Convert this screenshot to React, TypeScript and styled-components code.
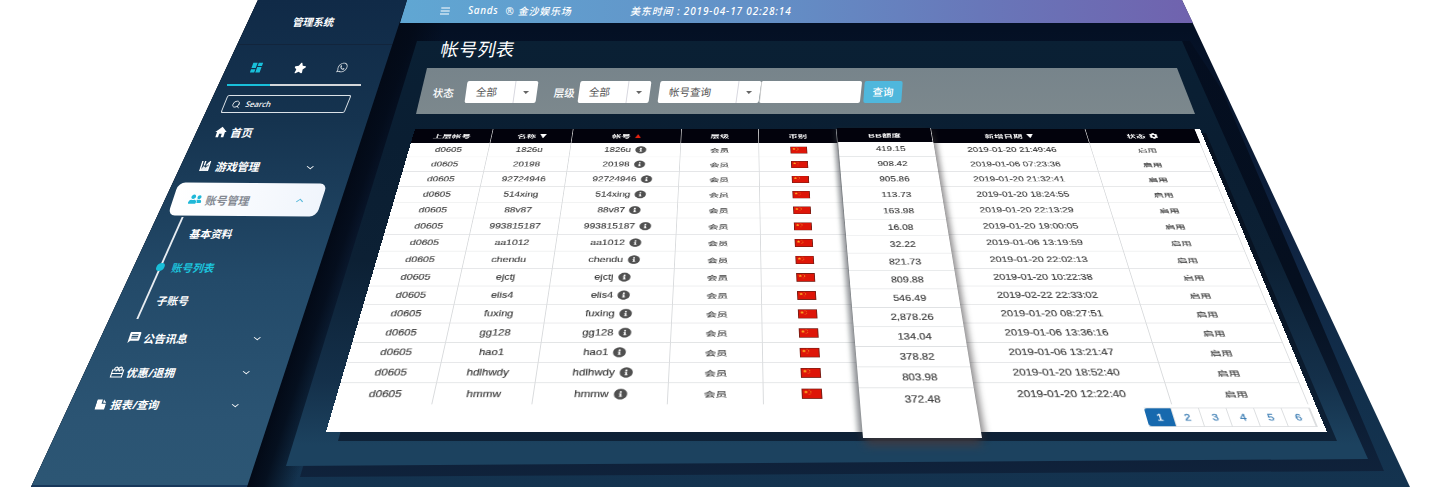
import React from "react";
import styled, { createGlobalStyle, css } from "styled-components";
import { MdDashboard, MdMessage } from "react-icons/md";
import { IoMdHome } from "react-icons/io";
import { FaStar, FaWhatsapp, FaUserFriends, FaInfoCircle, FaCog } from "react-icons/fa";
import { Search as SearchIcon } from "lucide-react";

type Point = [number, number];
type Quad = [Point, Point, Point, Point];

/* matrix3d that maps a w x h box onto a quad (top-left, top-right, bottom-right, bottom-left) */
const project = (w: number, h: number, q: Quad) => {
  const [[x0, y0], [x1, y1], [x2, y2], [x3, y3]] = q;
  const dx1 = x1 - x2, dx2 = x3 - x2, dx3 = x0 - x1 + x2 - x3;
  const dy1 = y1 - y2, dy2 = y3 - y2, dy3 = y0 - y1 + y2 - y3;
  const det = dx1 * dy2 - dx2 * dy1;
  const g = (dx3 * dy2 - dx2 * dy3) / det;
  const k = (dx1 * dy3 - dx3 * dy1) / det;
  const a = x1 - x0 + g * x1, b = x3 - x0 + k * x3;
  const d = y1 - y0 + g * y1, e = y3 - y0 + k * y3;
  return `matrix3d(${[a / w, d / w, 0, g / w, b / h, e / h, 0, k / h, 0, 0, 1, 0, x0, y0, 0, 1]
    .map((n) => n.toFixed(9))
    .join(",")})`;
};

const Global = createGlobalStyle`
  * { box-sizing: border-box; }
  body { margin: 0; background: #fff; overflow: hidden; }
`;

const Stage = styled.div`
  display: grid;
  position: relative;
  width: 1440px;
  height: 500px;
  overflow: hidden;
  background: #fff;
  color: #fff;
  font-family: "Noto Sans", "Noto Sans CJK SC", sans-serif;
  > * { grid-area: 1 / 1; }
`;

const Floor = styled.div`
  height: 487px;
  clip-path: polygon(258px 0, 1182px 0, 1410px 100%, 31px 100%);
  background:
    linear-gradient(108.2deg, #030a17 388px, rgba(3, 10, 23, 0.85) 402px, rgba(5, 16, 36, 0) 432px),
    linear-gradient(#041024 30px, #07152c 90px, #0f2341 230px, #12304c 400px, #14334f);
`;

const PanelShade = styled.div`
  height: 487px;
  clip-path: polygon(426px 50px, 1190px 41px, 1222px 90px, 1384px 471px, 300px 477px);
  background: linear-gradient(#040e20, #050f1f 60%, #0e2038 92%, #10233c);
`;

const Panel = styled.div`
  height: 487px;
  clip-path: polygon(417px 41px, 1182px 41px, 1368px 459px, 286px 466px);
  background: linear-gradient(#0a2034 41px, #0a1e32 140px, #0c2034 260px, #14304a 380px, #1c425f 445px);
`;

const CardShade = styled.div`
  height: 487px;
  clip-path: polygon(420px 145px, 1206px 133px, 1337px 441px, 338px 441px);
  background: linear-gradient(#050f1e, #081424 60%, #10263d);
`;

const Content = styled.main`
  display: flex;
  flex-direction: column;
  margin-left: 399px;
  width: 830px;
`;

const TopBar = styled.header`
  display: flex;
  align-items: center;
  height: 23px;
  padding-left: 41px;
  font-size: 10px;
  font-style: italic;
  font-weight: 500;
  letter-spacing: 0.7px;
  white-space: pre;
  background: linear-gradient(90deg, #60a7d3, #638fc6 45%, #6877b9 70%, #7062ae 96%);
  clip-path: polygon(8px 0, 783px 0, 794px 100%, 1px 100%);
  svg { margin-right: 18px; }
`;

const Brand = styled.span`
  display: flex;
  gap: 7px;
  width: 162px;
  padding-bottom: 3px;
`;

const Clock = styled.span`
  padding-bottom: 3px;
  letter-spacing: 0.86px;
`;

const Title = styled.h1`
  margin: 0 0 0 42px;
  height: 45px;
  padding-top: 7px;
  font-size: 18px;
  line-height: 38px;
  font-weight: 400;
  letter-spacing: 0.5px;
  transform: skewX(-12deg);
  transform-origin: 0 26px;
`;

const FilterBar = styled.section`
  display: flex;
  align-items: center;
  height: 46px;
  padding: 2px 0 0 34px;
  background: linear-gradient(#77848b, #7c888d);
  clip-path: polygon(28px 0, 778px 0, 796px 100%, 17px 100%);
`;

const Label = styled.span<{ $w: number }>`
  flex: none;
  width: ${(p) => p.$w}px;
  font-size: 10.5px;
  font-weight: 500;
  transform: skewX(-8deg);
`;

const Select = styled.div<{ $w: number; $gap: number }>`
  display: flex;
  flex: none;
  align-items: center;
  width: ${(p) => p.$w}px;
  height: 22px;
  margin-right: ${(p) => p.$gap}px;
  padding-left: 10px;
  border-radius: 2px;
  background: #fff;
  color: #555;
  font-size: 10.5px;
  transform: skewX(-8deg);
  &::after {
    content: "";
    margin-right: 8px;
    border: 3.5px solid transparent;
    border-top-color: #666;
    border-bottom: 0;
  }
`;

const SelectText = styled.span`
  flex: 1;
  margin-right: 8px;
  line-height: 22px;
  border-right: 1px solid #d8d8e0;
`;

const TextInput = styled.div`
  width: 101px;
  height: 22px;
  margin-right: 3px;
  border-left: 1px solid #ccc;
  border-radius: 2px;
  background: #fff;
  transform: skewX(-6deg);
`;

const QueryButton = styled.button`
  width: 38px;
  height: 22px;
  padding: 0 0 1px;
  border: 0;
  border-radius: 2px;
  background: #4fb7dc;
  color: #fff;
  font: 500 10.5px "Noto Sans CJK SC", sans-serif;
  transform: skewX(-4deg);
`;

/* ---------- table ---------- */

const CARD_W = 1000;
const CARD_H = 466;
const cardQuad: Quad = [[415, 129], [1200, 129], [1327, 432], [326, 432]];
const LIFT_W = 119;
const LIFT_H = 465;
const liftQuad: Quad = [[837, 128], [931, 128], [982, 438], [863, 438]];

const plane = css`
  transform-origin: 0 0;
  background: #fff;
  color: #3c3c3c;
  font-family: "Liberation Sans", "Noto Sans CJK SC", sans-serif;
`;

const Card = styled.section`
  ${plane}
  width: ${CARD_W}px;
  height: ${CARD_H}px;
  transform: ${project(CARD_W, CARD_H, cardQuad)};
`;

const Lifted = styled.section`
  ${plane}
  width: ${LIFT_W}px;
  height: ${LIFT_H}px;
  box-shadow: -5px 0 5px rgba(30, 40, 50, 0.35), 5px 2px 6px rgba(40, 40, 40, 0.3), 0 12px 9px -2px rgba(70, 60, 65, 0.75);
  transform: ${project(LIFT_W, LIFT_H, liftQuad)};
`;

const Row = styled.div<{ $head?: boolean }>`
  display: grid;
  grid-template-columns: 100px 102px 138px 98px 99px 118px 199px 139px;
  width: 993px;
  height: 27px;
  ${(p) => p.$head
    ? css`background: #02020c; color: #fff; font-weight: 700;`
    : css`border-bottom: 1.3px solid #dcdee0;`}
  &:nth-child(16) { border-bottom: 0; }
`;

const Cell = styled.div<{ $head?: boolean }>`
  display: flex;
  align-items: center;
  justify-content: center;
  gap: 5px;
  font-size: 12px;
  -webkit-text-stroke: ${(p) => (p.$head ? "0" : "0.2px #3c3c3c")};
  border-right: ${(p) => (p.$head ? "1.5px solid #b9b9bb" : "1.8px solid #d9dbdd")};
  &:last-child { border-right-color: ${(p) => (p.$head ? "transparent" : "#dcdee0")}; }
`;

/* flattened CJK text, as wide as usual but lower */
const Flat = styled.span`
  transform: scaleY(0.8);
`;

const Amount = styled.div<{ $head?: boolean }>`
  display: flex;
  align-items: center;
  justify-content: center;
  height: ${(p) => (p.$head ? 26 : 27)}px;
  padding-left: ${(p) => (p.$head ? 0 : 10)}px;
  font-size: 12px;
  ${(p) => p.$head
    ? css`background: #02020c; color: #fff; font-weight: 700; border-right: 1.5px solid #b9b9bb;`
    : css`border-bottom: 1.3px solid #dcdee0; -webkit-text-stroke: 0.2px #3c3c3c;`}
  &:last-child { border-bottom: 0; }
`;

const Sort = styled.i<{ $up?: boolean }>`
  border: 4.5px solid transparent;
  ${(p) => p.$up
    ? css`border-bottom: 8px solid #e0210f; border-top: 0;`
    : css`border-top: 8px solid #fff; border-bottom: 0;`}
`;

const Pager = styled.nav`
  display: flex;
  width: 169px;
  height: 24px;
  margin: 4px 0 0 824px;
  border: 1px solid #dcdee0;
  border-left: 0;
`;

const PageButton = styled.span<{ $on?: boolean }>`
  flex: 1;
  display: flex;
  align-items: center;
  justify-content: center;
  font-size: 11.5px;
  border-right: 1.5px solid #dcdee0;
  border-radius: ${(p) => (p.$on ? "3px 0 0 3px" : "0")};
  color: ${(p) => (p.$on ? "#fff" : "#3f7fb5")};
  background: ${(p) => (p.$on ? "#1769ae" : "#fff")};
  -webkit-text-stroke: 0.3px currentColor;
`;

/* ---------- sidebar ---------- */

const Sidebar = styled.aside`
  display: flex;
  flex-direction: column;
  position: relative;
  width: 407px;
  height: 487px;
  background: linear-gradient(#102a47, #15334f 120px, #234a69 280px, #2b5473 420px, #2c5674);
  border-bottom: 2px solid #17375a;
  clip-path: polygon(258px 0, 407px 0, 247px 100%, 31px 100%);
`;

const System = styled.div`
  height: 45px;
  margin-left: 238px;
  padding-left: 55px;
  border-bottom: 1px solid rgba(20, 25, 40, 0.4);
  font-size: 10.3px;
  line-height: 45px;
  font-weight: 700;
  span { display: inline-block; transform: skewX(-17deg); }
`;

const Tabs = styled.div`
  display: flex;
  gap: 31px;
  align-items: center;
  height: 39px;
  margin-left: 250px;
  padding-top: 6px;
  svg { transform: skewX(-20deg); }
`;

const TabLine = styled.div`
  width: 134px;
  height: 2px;
  margin-left: 227px;
  background: linear-gradient(90deg, #19c0da 43px, #d4d7da 43px);
`;

const SearchBox = styled.div`
  display: flex;
  align-items: center;
  gap: 5px;
  width: 124px;
  height: 18px;
  margin: 9px 0 1px 224px;
  padding-left: 7px;
  border: 1.5px solid #dbe2e8;
  border-radius: 2px;
  font-size: 7.8px;
  font-weight: 500;
  transform: skewX(-22deg);
`;

const Item = styled.div<{ $x: number; $sub?: boolean; $h?: number; $on?: boolean }>`
  display: flex;
  align-items: center;
  width: 150px;
  height: ${(p) => p.$h ?? 34}px;
  margin-left: ${(p) => p.$x}px;
  font-size: ${(p) => (p.$sub ? 10.7 : 11)}px;
  font-weight: 700;
  color: ${(p) => (p.$on ? "#1cc3dc" : "#fff")};
  > svg, > span { transform: skewX(-18deg); }
`;

const ItemIcon = styled.span<{ $w: number }>`
  display: flex;
  width: ${(p) => p.$w}px;
`;

const Pill = styled.div`
  display: flex;
  align-items: center;
  width: 149px;
  height: 33px;
  margin: 0 0 1px 173px;
  padding-left: 16px;
  border-radius: 7px;
  background: linear-gradient(90deg, #fff, #f0f5fc);
  color: #858a93;
  font-size: 11px;
  font-weight: 700;
  transform: skewX(-18deg) rotate(0.4deg);
`;

const Chevron = styled.i<{ $x: number; $up?: boolean }>`
  width: 4.5px;
  height: 4.5px;
  margin-left: auto;
  margin-right: ${(p) => p.$x}px;
  border: solid ${(p) => (p.$up ? "#54b7da" : "#fff")};
  border-width: 0 1.5px 1.5px 0;
  transform: ${(p) => (p.$up ? "scaleY(0.8) rotate(225deg) translate(-2px, -2px)" : "scaleY(0.8) rotate(45deg)")};
`;

const Branch = styled.div`
  position: absolute;
  left: 158.5px;
  top: 217px;
  width: 2px;
  height: 102px;
  background: #e8edf2;
  transform: skewX(-24deg);
  &::after {
    content: "";
    position: absolute;
    left: -3px;
    top: 46px;
    width: 7.5px;
    height: 7.5px;
    border-radius: 50%;
    background: #19bfd9;
  }
`;

const GameIcon = () => (
  <svg width="10" height="11" viewBox="0 0 10 11" fill="none" stroke="#fff" strokeWidth="1.4">
    <path d="M1.200 0v10M4 0v4.500M6.200 4.500l2.600-4M8.800 0v10" />
    <path d="M1.200 9.500L4 5.500l1.500 2 2-2 1.300 4z" fill="#e6ebf0" strokeWidth="0.800" />
  </svg>
);

const GiftIcon = () => (
  <svg width="13" height="12" viewBox="0 0 13 12" fill="none" stroke="#fff" strokeWidth="1.2">
    <path d="M1 4h11v7H1zM1 7.5h11M3 4c-1-3 2-4 3.500-1C8 0 11 1 10 4M4.500 5.500L6.500 3l2 2.500" />
  </svg>
);

const ReportIcon = () => (
  <svg width="10" height="11" viewBox="0 0 10 11" fill="#fff">
    <path d="M0 0.500h5.300v4.300h4.400v5.700H0zM6.500 0.500L9.700 3.700H6.500z" />
  </svg>
);

const MenuIcon = () => (
  <svg width="10" height="9" viewBox="0 0 10 9" stroke="#fff" strokeWidth="1.2">
    <path d="M1.300 1h9M0.700 4h9M0 7h9" />
  </svg>
);

const Flag = () => (
  <svg width="21" height="13" viewBox="0 0 21 13">
    <rect x="0.500" y="0.500" width="20" height="12" fill="#de1508" stroke="#7a1d14" />
    <path d="M4.500 2.300l.6 1.300 1.400.2-1 1 .2 1.400-1.200-.7-1.200.7.200-1.400-1-1 1.400-.2z" fill="#ffb423" />
    <path d="M7.500 2h1M9 3.600h1M9 5.500h1M7.500 7.200h1" stroke="#f0921e" />
  </svg>
);

const rows: [string, string, string][] = [
  ["1826u", "419.15", "2019-01-20 21:49:46"],
  ["20198", "908.42", "2019-01-06 07:23:36"],
  ["92724946", "905.86", "2019-01-20 21:32:41"],
  ["514xing", "113.73", "2019-01-20 18:24:55"],
  ["88v87", "163.98", "2019-01-20 22:13:29"],
  ["993815187", "16.08", "2019-01-20 19:00:05"],
  ["aa1012", "32.22", "2019-01-06 13:19:59"],
  ["chendu", "821.73", "2019-01-20 22:02:13"],
  ["ejctj", "809.88", "2019-01-20 10:22:38"],
  ["elis4", "546.49", "2019-02-22 22:33:02"],
  ["fuxing", "2,878.26", "2019-01-20 08:27:51"],
  ["gg128", "134.04", "2019-01-06 13:36:16"],
  ["hao1", "378.82", "2019-01-06 13:21:47"],
  ["hdlhwdy", "803.98", "2019-01-20 18:52:40"],
  ["hmmw", "372.48", "2019-01-20 12:22:40"],
];

export default function App() {
  return (
    <>
      <Global />
      <Stage>
        <Floor />
        <PanelShade />
        <Panel />
        <CardShade />
        <Content>
          <TopBar>
            <MenuIcon />
            <Brand><span>Sands</span><span>® 金沙娱乐场</span></Brand>
            <Clock>美东时间 : 2019-04-17 02:28:14</Clock>
          </TopBar>
          <Title>帐号列表</Title>
          <FilterBar>
            <Label $w={33}>状态</Label>
            <Select $w={71} $gap={17}><SelectText>全部</SelectText></Select>
            <Label $w={25}>层级</Label>
            <Select $w={71} $gap={9}><SelectText>全部</SelectText></Select>
            <Select $w={101} $gap={0}><SelectText>帐号查询</SelectText></Select>
            <TextInput />
            <QueryButton>查询</QueryButton>
          </FilterBar>
        </Content>

        <Card>
          <Row $head>
            <Cell $head><Flat>上层帐号</Flat></Cell>
            <Cell $head><Flat>名称</Flat><Sort /></Cell>
            <Cell $head><Flat>帐号</Flat><Sort $up /></Cell>
            <Cell $head><Flat>层级</Flat></Cell>
            <Cell $head><Flat>币别</Flat></Cell>
            <Cell $head />
            <Cell $head><Flat>新增日期</Flat><Sort /></Cell>
            <Cell $head><Flat>状态</Flat><FaCog size={11} /></Cell>
          </Row>
          {rows.map(([name, , date]) => (
            <Row key={name}>
              <Cell>d0605</Cell>
              <Cell>{name}</Cell>
              <Cell>{name}<FaInfoCircle size={14} color="#505050" /></Cell>
              <Cell><Flat>会员</Flat></Cell>
              <Cell><Flag /></Cell>
              <Cell />
              <Cell>{date}</Cell>
              <Cell><Flat>启用</Flat></Cell>
            </Row>
          ))}
          <Pager>
            {[1, 2, 3, 4, 5, 6].map((n) => (
              <PageButton key={n} $on={n === 1}>{n}</PageButton>
            ))}
          </Pager>
        </Card>

        <Lifted>
          <Amount $head><Flat>BB额度</Flat></Amount>
          {rows.map(([name, amount]) => <Amount key={name}>{amount}</Amount>)}
        </Lifted>

        <Sidebar>
          <System><span>管理系统</span></System>
          <Tabs>
            <MdDashboard size={13} color="#19c0da" />
            <FaStar size={12} />
            <FaWhatsapp size={11} color="#d5dbe0" />
          </Tabs>
          <TabLine />
          <SearchBox><SearchIcon size={9} />Search</SearchBox>
          <Item $x={214} $h={35}>
            <ItemIcon $w={17}><IoMdHome size={14} /></ItemIcon>
            <span>首页</span>
          </Item>
          <Item $x={200} $h={34}>
            <ItemIcon $w={16}><GameIcon /></ItemIcon>
            <span>游戏管理</span>
            <Chevron $x={38} />
          </Item>
          <Pill>
            <ItemIcon $w={17}><FaUserFriends size={13} color="#1fb8d8" /></ItemIcon>
            <span>账号管理</span>
            <Chevron $x={20} $up />
          </Pill>
          <Item $x={190} $h={33} $sub><span>基本资料</span></Item>
          <Item $x={172} $h={34} $sub $on><span>账号列表</span></Item>
          <Item $x={157} $h={33} $sub><span>子账号</span></Item>
          <Item $x={128} $h={41}>
            <ItemIcon $w={16}><MdMessage size={13} /></ItemIcon>
            <span>公告讯息</span>
            <Chevron $x={19} />
          </Item>
          <Item $x={111} $h={27}>
            <ItemIcon $w={16}><GiftIcon /></ItemIcon>
            <span>优惠/退拥</span>
            <Chevron $x={13} />
          </Item>
          <Item $x={96} $h={38}>
            <ItemIcon $w={15}><ReportIcon /></ItemIcon>
            <span>报表/查询</span>
            <Chevron $x={9} />
          </Item>
          <Branch />
        </Sidebar>
      </Stage>
    </>
  );
}
